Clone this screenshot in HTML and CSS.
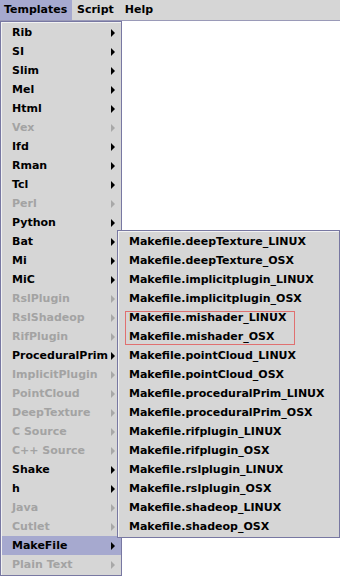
FILE: index.html
```html
<!DOCTYPE html>
<html lang="en">
<head>
  <meta charset="utf-8">
  <title>Templates</title>
  <link rel="stylesheet" href="styles.css">
</head>
<body>
  <div id="app">
    <!-- menu bar -->
    <ul class="menubar">
      <li class="bar-item open">Templates</li>
      <li class="bar-item">Script</li>
      <li class="bar-item">Help</li>
    </ul>

    <!-- Templates popup -->
    <ul class="popup main-menu">
      <li class="item sub">Rib</li>
      <li class="item sub">SI</li>
      <li class="item sub">Slim</li>
      <li class="item sub">Mel</li>
      <li class="item sub">Html</li>
      <li class="item sub off">Vex</li>
      <li class="item sub">Ifd</li>
      <li class="item sub">Rman</li>
      <li class="item sub">Tcl</li>
      <li class="item sub off">Perl</li>
      <li class="item sub">Python</li>
      <li class="item sub">Bat</li>
      <li class="item sub">Mi</li>
      <li class="item sub">MiC</li>
      <li class="item sub off">RslPlugin</li>
      <li class="item sub off">RslShadeop</li>
      <li class="item sub off">RifPlugin</li>
      <li class="item sub">ProceduralPrim</li>
      <li class="item sub off">ImplicitPlugin</li>
      <li class="item sub off">PointCloud</li>
      <li class="item sub off">DeepTexture</li>
      <li class="item sub off">C Source</li>
      <li class="item sub off">C++ Source</li>
      <li class="item sub">Shake</li>
      <li class="item sub">h</li>
      <li class="item sub off">Java</li>
      <li class="item sub off">Cutlet</li>
      <li class="item sub active">MakeFile</li>
      <li class="item sub off">Plain Text</li>
    </ul>

    <!-- MakeFile submenu -->
    <ul class="popup sub-menu">
      <li class="item">Makefile.deepTexture_LINUX</li>
      <li class="item">Makefile.deepTexture_OSX</li>
      <li class="item">Makefile.implicitplugin_LINUX</li>
      <li class="item">Makefile.implicitplugin_OSX</li>
      <li class="item">Makefile.mishader_LINUX</li>
      <li class="item">Makefile.mishader_OSX</li>
      <li class="item">Makefile.pointCloud_LINUX</li>
      <li class="item">Makefile.pointCloud_OSX</li>
      <li class="item">Makefile.proceduralPrim_LINUX</li>
      <li class="item">Makefile.proceduralPrim_OSX</li>
      <li class="item">Makefile.rifplugin_LINUX</li>
      <li class="item">Makefile.rifplugin_OSX</li>
      <li class="item">Makefile.rslplugin_LINUX</li>
      <li class="item">Makefile.rslplugin_OSX</li>
      <li class="item">Makefile.shadeop_LINUX</li>
      <li class="item">Makefile.shadeop_OSX</li>
    </ul>

    <!-- highlight box -->
    <div class="mark"></div>
  </div>
</body>
</html>
```

FILE: styles.css
```css
* {
  margin: 0;
  padding: 0;
  box-sizing: border-box;
}
ul {
  list-style: none;
}
body {
  background: #fff;
  font-family: "DejaVu Sans", sans-serif;
  font-size: 11px;
  font-weight: bold;
  color: #000;
}
#app {
  position: relative;
  width: 340px;
  height: 576px;
  overflow: hidden;
}
.menubar {
  display: flex;
  height: 21px;
  background: #d6d6d6;
  border-bottom: 1px solid #9a9ab8;
}
.bar-item {
  padding: 0 6px 0 5px;
  line-height: 20px;
}
.bar-item.open {
  width: 72px;
  padding-left: 4px;
  background: #a6a9cf;
}
.popup {
  position: absolute;
  background: #d6d6d6;
  border: 1px solid #7878a2;
  box-shadow: inset 1px 1px 0 #f2f2f2;
  padding: 1px 0 1px 1px;
}
.main-menu {
  top: 21px;
  left: 0;
  width: 122px;
}
.sub-menu {
  top: 230px;
  left: 117px;
  width: 223px;
}
.item {
  position: relative;
  height: 19px;
  line-height: 19px;
  padding-left: 10px;
  white-space: nowrap;
}
.item.sub::after {
  content: "";
  position: absolute;
  right: 6px;
  top: 6px;
  border-left: 4px solid #000;
  border-top: 4px solid transparent;
  border-bottom: 4px solid transparent;
}
.item.off {
  color: #a3a3a3;
}
.item.off::after {
  border-left-color: #a8a8a8;
}
.item.active {
  background: #a6a9cf;
}
.mark {
  position: absolute;
  left: 125px;
  top: 311px;
  width: 170px;
  height: 34px;
  border: 1px solid #e07070;
}
```
